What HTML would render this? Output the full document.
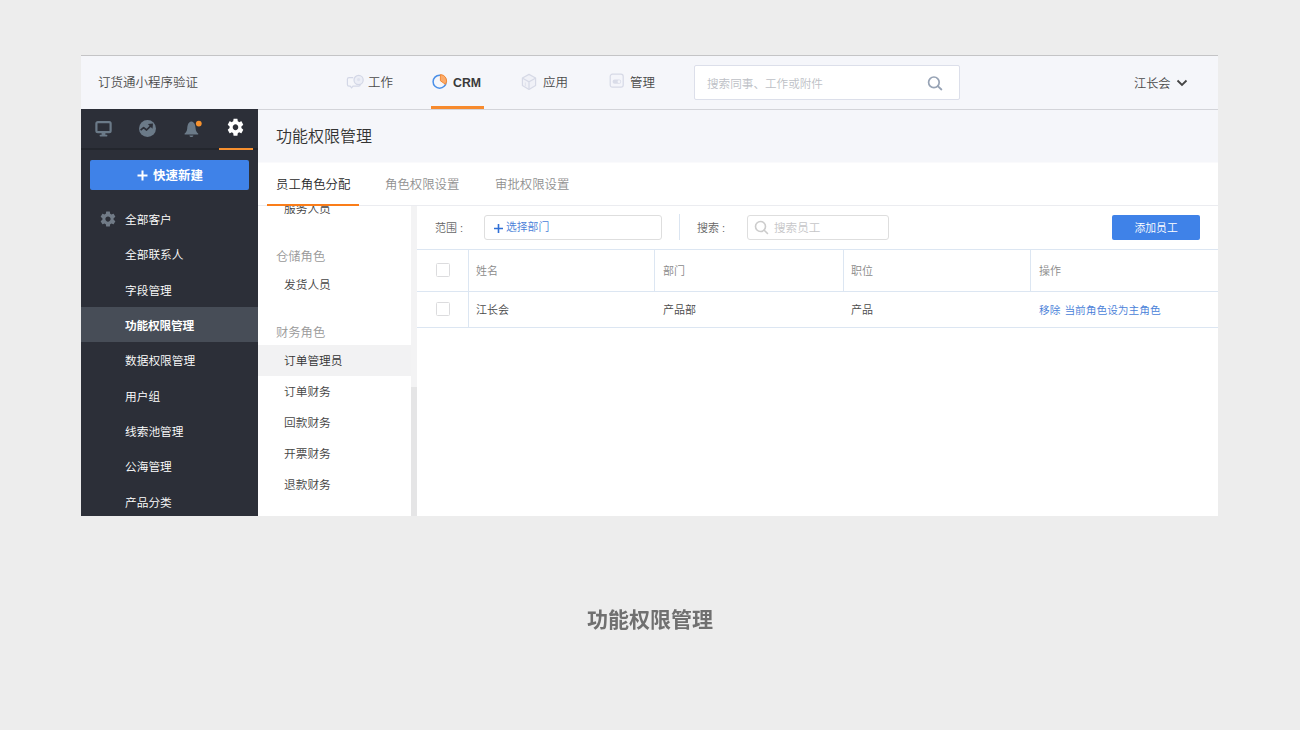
<!DOCTYPE html>
<html lang="zh-CN">
<head>
<meta charset="utf-8">
<title>功能权限管理</title>
<style>
*{box-sizing:border-box;margin:0;padding:0}
html,body{width:1300px;height:730px;overflow:hidden}
body{background:#ededed;font-family:"Liberation Sans","Noto Sans CJK SC",sans-serif;color:#333;position:relative;font-size:12px;font-weight:350}
.abs{position:absolute}
.t{position:absolute;white-space:nowrap;line-height:1}
#panel{position:absolute;left:81px;top:55px;width:1137px;height:461px;background:#fff;overflow:hidden}
#topline{position:absolute;left:0;top:0;width:1137px;height:1px;background:#c4c4c6}
#header{position:absolute;left:0;top:1px;width:1137px;height:54px;background:#f5f6fa;border-bottom:1px solid #d3d4d9}
#sidebar{position:absolute;left:0;top:54px;width:177px;height:407px;background:#2c2f38}
#icontabs{position:absolute;left:0;top:0;width:177px;height:41px;border-bottom:2px solid #23262d}
#titlebar{position:absolute;left:177px;top:55px;width:960px;height:52px;background:#f5f6fa}
#tabs{position:absolute;left:177px;top:107px;width:960px;height:44px;background:#fff;border-bottom:1px solid #ebecf0;border-top:1px solid #fafafc}
#roles{position:absolute;left:177px;top:151px;width:153px;height:310px;background:#fff;overflow:hidden}
#gutter{position:absolute;left:330px;top:151px;width:6px;height:310px;background:#f3f3f4}
#content{position:absolute;left:336px;top:151px;width:801px;height:310px;background:#fff}
</style>
</head>
<body>
<div id="panel">
  <div id="topline"></div>
  <div id="header">
    <div class="t" style="left:17px;top:21px;font-size:12.5px;color:#4a4a4a">订货通小程序验证</div>
    <!-- nav -->
    <svg class="abs" style="left:265px;top:18px" width="19" height="17" viewBox="0 0 19 17"><path d="M7.2 3.6 H3 Q1.4 3.6 1.4 5.2 V10.6 Q1.4 12.2 3 12.2 H4.2 L5.6 13.8 L7 12.2 H12.6 Q14.2 12.2 14.2 10.8" fill="none" stroke="#d3d7e6" stroke-width="1.2"/><circle cx="12.6" cy="6" r="4.6" fill="#eceef6" stroke="#d3d7e6" stroke-width="1.2"/><circle cx="12.6" cy="5.6" r="1.6" fill="#dfe2ee"/></svg>
    <svg class="abs" style="left:350px;top:16px" width="19" height="19" viewBox="0 0 19 19"><circle cx="8.6" cy="9.7" r="6.5" fill="none" stroke="#4a8fe8" stroke-width="1.5"/><path d="M9.4 8.8 V2.6 A6.2 6.2 0 0 1 14.5 12.3 Z" fill="#fbab6a" stroke="#f58a34" stroke-width="1" stroke-linejoin="round"/></svg>
    <svg class="abs" style="left:439px;top:17px" width="18" height="18" viewBox="0 0 18 18"><path d="M9 1.4 L15.6 5 V12.6 L9 16.4 L2.4 12.6 V5 Z" fill="#f0f1f7" stroke="#d6d9e6" stroke-width="1.2" stroke-linejoin="round"/><path d="M2.6 5.2 L9 8.8 L15.4 5.2 M9 8.8 V16" fill="none" stroke="#d6d9e6" stroke-width="1.2"/><path d="M5.4 9.6 V13.2" stroke="#e2e4ee" stroke-width="1.2"/></svg>
    <svg class="abs" style="left:528px;top:17px" width="16" height="16" viewBox="0 0 16 16"><rect x="1.2" y="1.2" width="13" height="13" rx="2.2" fill="#f4f5fa" stroke="#d6d9e6" stroke-width="1.2"/><rect x="3.6" y="6.6" width="8.6" height="4.2" rx="2.1" fill="#d9dce8"/><circle cx="10" cy="8.7" r="1.4" fill="#f4f5fa"/></svg>
    <div class="t" style="left:287px;top:21px;font-size:12.5px;color:#4a4a4a">工作</div>
    <div class="t" style="left:372px;top:21px;font-size:12.3px;color:#3a3a3a;font-weight:bold">CRM</div>
    <div class="abs" style="left:350px;top:50px;width:53px;height:3px;background:#f78a2d"></div>
    <div class="t" style="left:462px;top:21px;font-size:12.5px;color:#4a4a4a">应用</div>
    <div class="t" style="left:549px;top:21px;font-size:12.5px;color:#4a4a4a">管理</div>
    <!-- search -->
    <div class="abs" style="left:613px;top:9px;width:266px;height:35px;background:#fff;border:1px solid #dcdfea;border-radius:2px"></div>
    <div class="t" style="left:626px;top:22px;font-size:11.6px;color:#bdbfc6">搜索同事、工作或附件</div>
    <svg class="abs" style="left:845px;top:19px" width="18" height="18" viewBox="0 0 18 18"><circle cx="7.9" cy="7.3" r="5.3" fill="none" stroke="#97a3b5" stroke-width="1.7"/><path d="M11.8 11.1 L15.4 14.5" stroke="#97a3b5" stroke-width="1.8" stroke-linecap="round"/></svg>
    <!-- user -->
    <div class="t" style="left:1053px;top:21.5px;font-size:12.2px;color:#4a4a4a">江长会</div>
    <svg class="abs" style="left:1095px;top:22.5px" width="12" height="9" viewBox="0 0 12 9"><path d="M1.5 1.5 L6 6 L10.5 1.5" fill="none" stroke="#444" stroke-width="1.8"/></svg>
  </div>

  <div id="sidebar">
    <div id="icontabs"></div>
    <!-- monitor -->
    <svg class="abs" style="left:14px;top:12px" width="17" height="17" viewBox="0 0 17 17"><rect x="1.4" y="1.2" width="14.2" height="10" rx="1.4" fill="none" stroke="#6b7a88" stroke-width="2.2"/><rect x="6.6" y="12" width="3.8" height="2.2" fill="#6b7a88"/><rect x="4.6" y="13.8" width="7.8" height="1.6" rx=".6" fill="#6b7a88"/></svg>
    <!-- trend -->
    <svg class="abs" style="left:57px;top:10px" width="19" height="19" viewBox="0 0 19 19"><circle cx="9.5" cy="9.5" r="8.5" fill="#6b7a88"/><path d="M2.6 11.2 L5.6 8.6 L8.6 11 L13 6.6" fill="none" stroke="#2c2f38" stroke-width="1.7" stroke-linejoin="round"/><path d="M9.8 5.0 L15 4.5 L14.5 9.7 Z" fill="#2c2f38"/></svg>
    <!-- bell -->
    <svg class="abs" style="left:100.6px;top:10.6px" width="22" height="19" viewBox="0 0 22 19"><path d="M9.4 1.6 C5.9 2.2 5.5 5.6 5.2 8.6 C5 11 4 12.6 2.6 13.6 L2.6 14.4 L16.2 14.4 L16.2 13.6 C14.8 12.6 13.8 11 13.6 8.6 C13.3 5.6 12.9 2.2 9.4 1.6 Z" fill="#6b7a88"/><path d="M7.4 15.4 L11.4 15.4 C11.2 16.6 10.4 17 9.4 17 C8.4 17 7.6 16.6 7.4 15.4 Z" fill="#6b7a88"/><circle cx="16.8" cy="3.6" r="2.9" fill="#f7922e"/></svg>
    <!-- gear -->
    <svg class="abs" style="left:145.2px;top:8px" width="19" height="20.5" viewBox="0 0 24 24" preserveAspectRatio="none"><path fill="#fff" d="M19.43 12.98c.04-.32.07-.64.07-.98s-.03-.66-.07-.98l2.11-1.65c.19-.15.24-.42.12-.64l-2-3.46c-.12-.22-.39-.3-.61-.22l-2.49 1c-.52-.4-1.08-.73-1.69-.98l-.38-2.65C14.46 2.18 14.25 2 14 2h-4c-.25 0-.46.18-.49.42l-.38 2.65c-.61.25-1.17.59-1.69.98l-2.49-1c-.23-.09-.49 0-.61.22l-2 3.46c-.13.22-.07.49.12.64l2.11 1.65c-.04.32-.07.65-.07.98s.03.66.07.98l-2.11 1.65c-.19.15-.24.42-.12.64l2 3.46c.12.22.39.3.61.22l2.49-1c.52.4 1.08.73 1.69.98l.38 2.65c.03.24.24.42.49.42h4c.25 0 .46-.18.49-.42l.38-2.65c.61-.25 1.17-.59 1.69-.98l2.49 1c.23.09.49 0 .61-.22l2-3.46c.12-.22.07-.49-.12-.64l-2.11-1.65zM12 15.5c-1.93 0-3.5-1.57-3.5-3.5s1.57-3.5 3.5-3.5 3.5 1.57 3.5 3.5-1.57 3.5-3.5 3.5z"/></svg>
    <div class="abs" style="left:138px;top:39px;width:34px;height:2px;background:#f7902f"></div>
    <div class="abs" style="left:9px;top:51px;width:159px;height:30px;background:#3f82e8;border-radius:2px"></div>
    <svg class="abs" style="left:56px;top:61px" width="11" height="11" viewBox="0 0 11 11"><path d="M5.5 0.5 V10.5 M0.5 5.5 H10.5" stroke="#fff" stroke-width="2"/></svg>
    <div class="t" style="left:72px;top:61px;font-size:12.5px;color:#fff;font-weight:bold">快速新建</div>
    <svg class="abs" style="left:17.5px;top:100.5px" width="18" height="18" viewBox="0 0 24 24"><path fill="#717b87" d="M19.43 12.98c.04-.32.07-.64.07-.98s-.03-.66-.07-.98l2.11-1.65c.19-.15.24-.42.12-.64l-2-3.46c-.12-.22-.39-.3-.61-.22l-2.49 1c-.52-.4-1.08-.73-1.69-.98l-.38-2.65C14.46 2.18 14.25 2 14 2h-4c-.25 0-.46.18-.49.42l-.38 2.65c-.61.25-1.17.59-1.69.98l-2.49-1c-.23-.09-.49 0-.61.22l-2 3.46c-.13.22-.07.49.12.64l2.11 1.65c-.04.32-.07.65-.07.98s.03.66.07.98l-2.11 1.65c-.19.15-.24.42-.12.64l2 3.46c.12.22.39.3.61.22l2.49-1c.52.4 1.08.73 1.69.98l.38 2.65c.03.24.24.42.49.42h4c.25 0 .46-.18.49-.42l.38-2.65c.61-.25 1.17-.59 1.69-.98l2.49 1c.23.09.49 0 .61-.22l2-3.46c.12-.22.07-.49-.12-.64l-2.11-1.65zM12 15.5c-1.93 0-3.5-1.57-3.5-3.5s1.57-3.5 3.5-3.5 3.5 1.57 3.5 3.5-1.57 3.5-3.5 3.5z"/></svg>
    <div class="abs" style="left:0;top:198px;width:177px;height:35px;background:#474d57"></div>
    <div class="t" style="left:44px;top:105px;font-size:11.7px;color:#fff">全部客户</div>
    <div class="t" style="left:44px;top:140px;font-size:11.7px;color:#fff">全部联系人</div>
    <div class="t" style="left:44px;top:176px;font-size:11.7px;color:#fff">字段管理</div>
    <div class="t" style="left:44px;top:211px;font-size:11.7px;color:#fff;font-weight:bold;letter-spacing:-0.2px">功能权限管理</div>
    <div class="t" style="left:44px;top:246px;font-size:11.7px;color:#fff">数据权限管理</div>
    <div class="t" style="left:44px;top:282px;font-size:11.7px;color:#fff">用户组</div>
    <div class="t" style="left:44px;top:317px;font-size:11.7px;color:#fff">线索池管理</div>
    <div class="t" style="left:44px;top:352px;font-size:11.7px;color:#fff">公海管理</div>
    <div class="t" style="left:44px;top:388px;font-size:11.7px;color:#fff">产品分类</div>
  </div>

  <div id="titlebar">
    <div class="t" style="left:18px;top:19px;font-size:16px;color:#333">功能权限管理</div>
  </div>
  <div id="tabs">
    <div class="t" style="left:18px;top:15.5px;font-size:12.4px;color:#2a2a2a">员工角色分配</div>
    <div class="t" style="left:127px;top:15.5px;font-size:12.4px;color:#909090">角色权限设置</div>
    <div class="t" style="left:237px;top:15.5px;font-size:12.4px;color:#909090">审批权限设置</div>
    <div class="abs" style="left:9px;top:41px;width:92px;height:2px;background:#fa7d19"></div>
  </div>

  <div id="roles">
    <div class="t" style="left:26px;top:-3.4px;font-size:11.7px;color:#444">服务人员</div>
    <div class="t" style="left:18px;top:45px;font-size:12.3px;color:#999">仓储角色</div>
    <div class="t" style="left:26px;top:73px;font-size:11.7px;color:#444">发货人员</div>
    <div class="t" style="left:18px;top:121px;font-size:12.3px;color:#999">财务角色</div>
    <div class="abs" style="left:0;top:139px;width:153px;height:31px;background:#f2f2f3"></div>
    <div class="t" style="left:26px;top:149px;font-size:11.7px;color:#333">订单管理员</div>
    <div class="t" style="left:26px;top:180px;font-size:11.7px;color:#444">订单财务</div>
    <div class="t" style="left:26px;top:211px;font-size:11.7px;color:#444">回款财务</div>
    <div class="t" style="left:26px;top:242px;font-size:11.7px;color:#444">开票财务</div>
    <div class="t" style="left:26px;top:273px;font-size:11.7px;color:#444">退款财务</div>
  </div>
  <div id="gutter"><div class="abs" style="left:0;top:181px;width:6px;height:129px;background:#e5e5e6"></div></div>

  <div id="content">
    <div class="t" style="left:18px;top:17px;font-size:11px;color:#666">范围<span style="margin-left:3px">:</span></div>
    <div class="abs" style="left:67px;top:9px;width:178px;height:25px;border:1px solid #dedede;border-radius:3px;background:#fff"></div>
    <svg class="abs" style="left:77px;top:18px" width="9" height="9" viewBox="0 0 9 9"><path d="M4.5 0 V9 M0 4.5 H9" stroke="#2f6fd6" stroke-width="1.6"/></svg>
    <div class="t" style="left:89px;top:15.5px;font-size:10.8px;color:#4a80d8">选择部门</div>
    <div class="abs" style="left:262px;top:8px;width:1px;height:26px;background:#dbe5f1"></div>
    <div class="t" style="left:280px;top:17px;font-size:11px;color:#666">搜索<span style="margin-left:3px">:</span></div>
    <div class="abs" style="left:330px;top:9px;width:142px;height:25px;border:1px solid #dedede;border-radius:3px;background:#fff"></div>
    <svg class="abs" style="left:337px;top:14px" width="15" height="15" viewBox="0 0 15 15"><circle cx="6.5" cy="6.5" r="5" fill="none" stroke="#cccccc" stroke-width="1.6"/><path d="M10.2 10.2 L13.5 13.5" stroke="#cccccc" stroke-width="1.6" stroke-linecap="round"/></svg>
    <div class="t" style="left:357px;top:16px;font-size:11.6px;color:#c6c6c8">搜索员工</div>
    <div class="abs" style="left:695px;top:9px;width:88px;height:25px;background:#3f82e8;border-radius:2px"></div>
    <div class="t" style="left:717.5px;top:17px;font-size:10.8px;color:#fff">添加员工</div>

    <!-- table -->
    <div class="abs" style="left:0;top:43px;width:801px;height:1px;background:#dce6f2"></div>
    <div class="abs" style="left:0;top:85px;width:801px;height:1px;background:#dce6f2"></div>
    <div class="abs" style="left:0;top:121px;width:801px;height:1px;background:#dce6f2"></div>
    <div class="abs" style="left:51px;top:44px;width:1px;height:77px;background:#dce6f2"></div>
    <div class="abs" style="left:237px;top:44px;width:1px;height:42px;background:#dce6f2"></div>
    <div class="abs" style="left:426px;top:44px;width:1px;height:42px;background:#dce6f2"></div>
    <div class="abs" style="left:613px;top:44px;width:1px;height:42px;background:#dce6f2"></div>
    <div class="abs" style="left:19px;top:57px;width:14px;height:14px;border:1px solid #dcdcde;border-radius:1.5px;background:#fff"></div>
    <div class="abs" style="left:19px;top:96px;width:14px;height:14px;border:1px solid #dcdcde;border-radius:1.5px;background:#fff"></div>
    <div class="t" style="left:59px;top:60px;font-size:11px;color:#8a8a8a">姓名</div>
    <div class="t" style="left:246px;top:60px;font-size:11px;color:#8a8a8a">部门</div>
    <div class="t" style="left:434px;top:60px;font-size:11px;color:#8a8a8a">职位</div>
    <div class="t" style="left:622px;top:60px;font-size:11px;color:#8a8a8a">操作</div>
    <div class="t" style="left:59px;top:99px;font-size:11px;color:#4a4a4a">江长会</div>
    <div class="t" style="left:246px;top:99px;font-size:11px;color:#4a4a4a">产品部</div>
    <div class="t" style="left:434px;top:99px;font-size:11px;color:#4a4a4a">产品</div>
    <div class="t" style="left:622px;top:99px;font-size:10.7px;color:#477ed8">移除<span style="margin-left:4px">当前角色设为主角色</span></div>
  </div>
</div>
<div class="t" style="left:586.5px;top:608.5px;font-size:21px;color:#707070;font-weight:bold;will-change:transform">功能权限管理</div>
</body>
</html>
